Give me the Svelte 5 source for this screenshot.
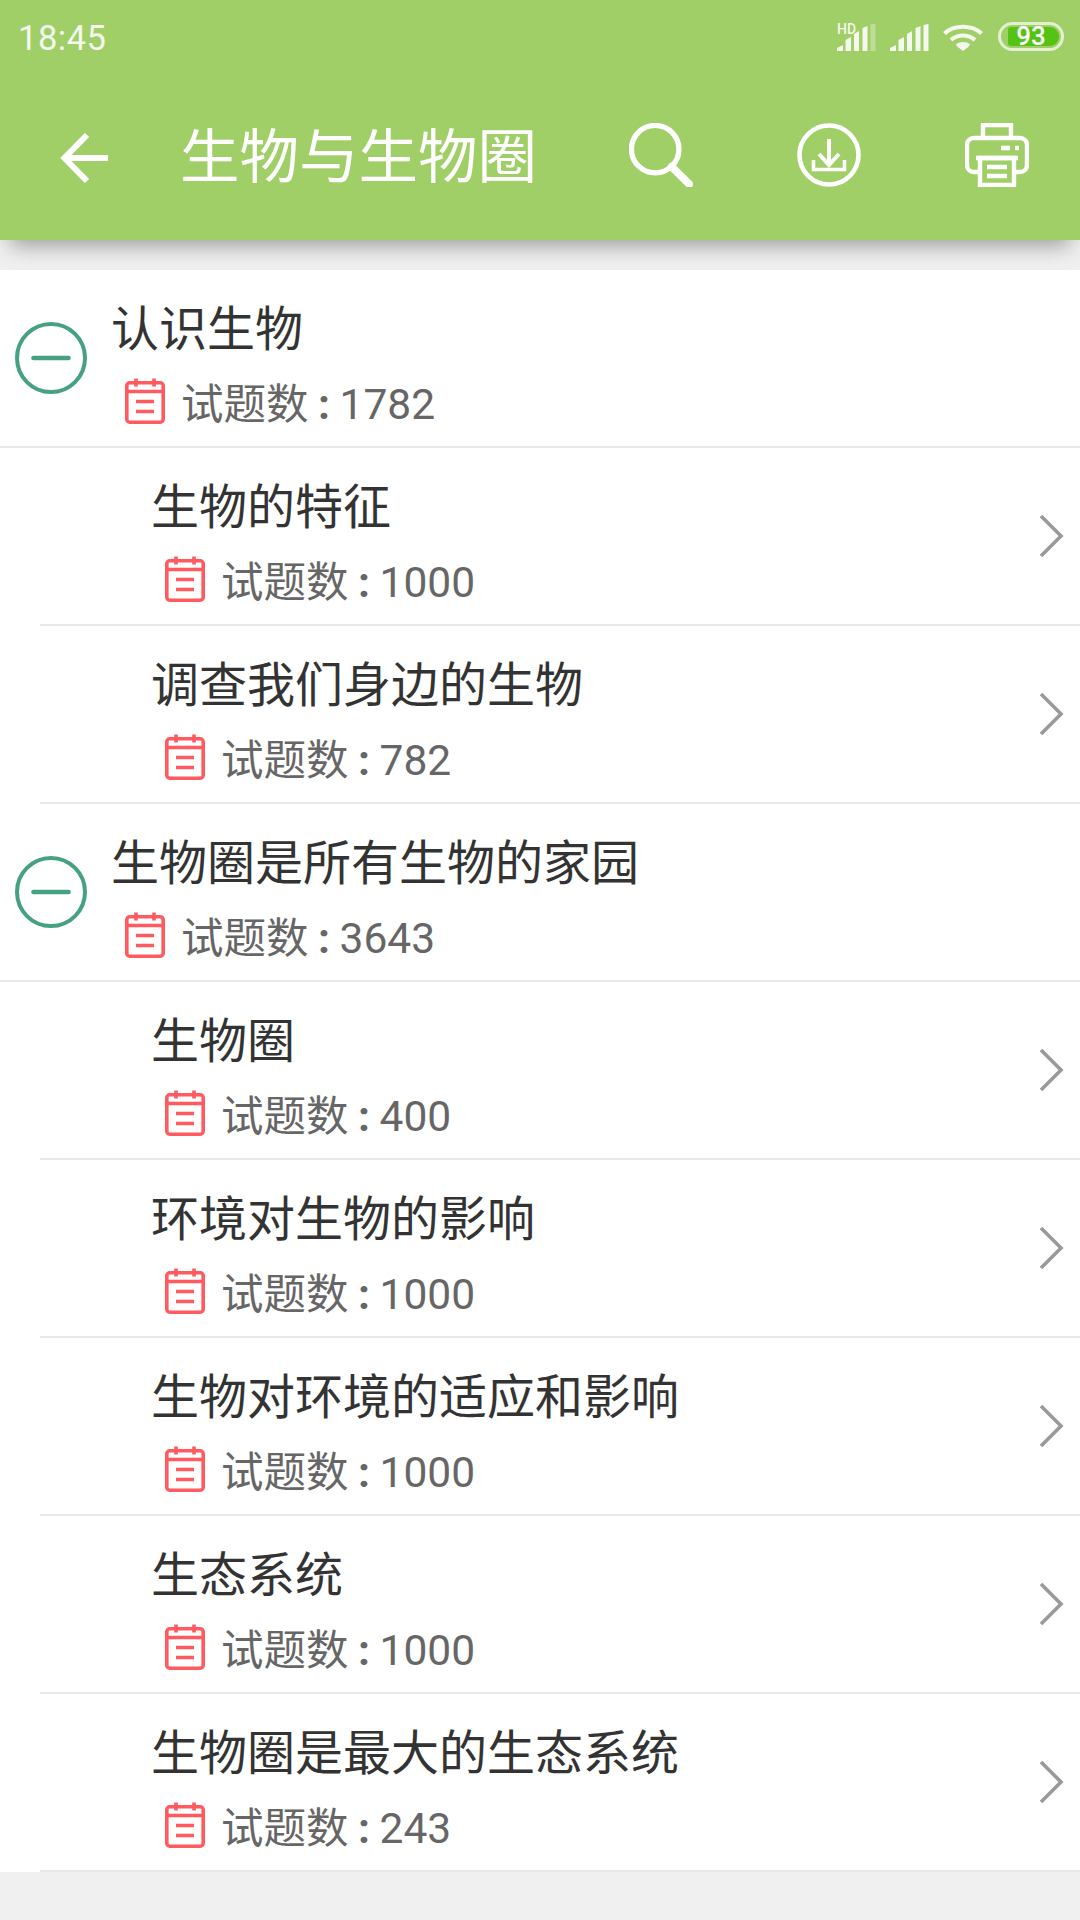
<script>
  const groups = [
    {
      name: '认识生物',
      count: 1782,
      children: [
        { name: '生物的特征', count: 1000 },
        { name: '调查我们身边的生物', count: 782 }
      ]
    },
    {
      name: '生物圈是所有生物的家园',
      count: 3643,
      children: [
        { name: '生物圈', count: 400 },
        { name: '环境对生物的影响', count: 1000 },
        { name: '生物对环境的适应和影响', count: 1000 },
        { name: '生态系统', count: 1000 },
        { name: '生物圈是最大的生态系统', count: 243 }
      ]
    }
  ];
</script>

{#snippet counter(count)}
  <div class="count">
    <svg class="cal" width="40" height="46" viewBox="0 0 40 46" fill="none" stroke="#ff5a5f" stroke-width="3.600">
      <rect x="1.800" y="4.800" width="36.400" height="39.400" rx="3" />
      <path d="M2 13.500h36M11 0.500v8M29 0.500v8" />
      <path d="M11 23.500h18M11 33.500h18" />
    </svg>
    <span>试题数<span class="colon">:</span>{count}</span>
  </div>
{/snippet}

<div class="page">
  <header class="appbar">
    <div class="status">
      <span class="time">18:45</span>
      <div class="status-icons">
        <div class="signal">
          <span class="hd-label">HD</span>
          <svg width="39" height="27" viewBox="0 0 39 27" fill="#f4f8ee">
            <path d="M0 27v-3l6-3v6zM8.500 27V16l5.500-3v14zM17 27V10l5-3v20zM25.500 27V4l5-2v25z" />
            <path d="M33.500 27V0h5v27z" opacity=".35" />
          </svg>
        </div>
        <svg width="39" height="27" viewBox="0 0 39 27" fill="#f4f8ee">
          <path d="M0 27v-3l6-3v6zM8.500 27V16l5.500-3v14zM17 27V10l5-3v20zM25.500 27V4l5-2v25zM33.500 27V1l5-1v27z" />
        </svg>
        <svg width="40" height="28" viewBox="0 0 40 28" fill="none" stroke="#f4f8ee" stroke-width="4.200">
          <path d="M1.500 10.500C11 1.500 29 1.500 38.500 10.500" />
          <path d="M8 17c7-6 17-6 24 0" />
          <path d="M14 23c3.500-2.600 8.500-2.600 12 0" />
          <path d="M15.500 24.500l4.500-2.500l4.500 2.500l-4.500 3.500z" fill="#f4f8ee" stroke="none" />
        </svg>
        <div class="battery">
          <div class="battery-fill"></div>
          <span>93</span>
        </div>
      </div>
    </div>
    <div class="toolbar">
      <svg class="back" width="48" height="50" viewBox="0 0 48 50" fill="none" stroke="#fff" stroke-width="6">
        <path d="M27 2L4.500 25l22.500 23M4.500 25H48" />
      </svg>
      <h1>生物与生物圈</h1>
      <div class="actions">
        <svg width="64" height="64" viewBox="0 0 66 66" fill="none" stroke="#fff" stroke-width="5.500">
          <circle cx="27" cy="27" r="24.500" />
          <path d="M44 45l18 18" stroke-width="8" stroke-linecap="round" />
        </svg>
        <svg width="64" height="64" viewBox="0 0 64 64" fill="none" stroke="#fff">
          <circle cx="32" cy="32" r="29.500" stroke-width="4.600" />
          <path d="M32 16v26M22 31l10 11 10-11" stroke-width="4" />
          <path d="M16.500 37v9.500h31V37" stroke-width="3.600" />
        </svg>
        <svg width="64" height="64" viewBox="0 0 64 64" fill="none" stroke="#fff" stroke-width="4.400">
          <path d="M18 15V2h28v13" />
          <path d="M15 49H9c-4 0-7-3-7-7V22c0-4 3-7 7-7h46c4 0 7 3 7 7v20c0 4-3 7-7 7h-6" />
          <path d="M11 35h42" />
          <path d="M15 35h34v27H15z" />
          <path d="M22 44h20M22 53h20" />
          <path d="M36 25h9M50 25h4" />
        </svg>
      </div>
    </div>
  </header>

  <main class="list">
    {#each groups as group}
      <div class="row group">
        <svg class="minus" width="72" height="72" viewBox="0 0 72 72" fill="none" stroke="#45a180">
          <circle cx="36" cy="36" r="34" stroke-width="4" />
          <path d="M18.500 36h35" stroke-width="4.600" stroke-linecap="round" />
        </svg>
        <div class="text">
          <div class="title">{group.name}</div>
          {@render counter(group.count)}
        </div>
      </div>
      {#each group.children as child}
        <div class="row child">
          <div class="text">
            <div class="title">{child.name}</div>
            {@render counter(child.count)}
          </div>
          <svg class="chevron" width="25" height="44" viewBox="0 0 25 44" fill="none" stroke="#999" stroke-width="3.600">
            <path d="M2 2l20 20L2 42" />
          </svg>
        </div>
      {/each}
    {/each}
  </main>
</div>

<style>
  :global(body) {
    margin: 0;
    background: #f0f0f0;
  }
  .page {
    height: 1920px;
    overflow: hidden;
    font-family: Roboto, "Noto Sans CJK SC", sans-serif;
  }
  .appbar {
    position: relative;
    height: 240px;
    background: #a0cf67;
    color: #fff;
    box-shadow: 0 16px 20px -10px rgba(0, 0, 0, 0.34);
  }
  .status {
    display: flex;
    justify-content: space-between;
    align-items: center;
    height: 76px;
    padding: 0 16px 0 18px;
  }
  .time {
    font-size: 34.500px;
    color: #f4f8ee;
    letter-spacing: 0.5px;
  }
  .status-icons {
    display: flex;
    align-items: flex-end;
    gap: 14px;
    height: 29px;
    margin-top: -4px;
  }
  .signal {
    position: relative;
    height: 27px;
  }
  .hd-label {
    position: absolute;
    left: 0;
    top: -2px;
    font-size: 14px;
    line-height: 1;
    font-weight: 500;
    color: #f4f8ee;
  }
  .battery {
    position: relative;
    box-sizing: border-box;
    width: 66px;
    height: 29px;
    margin-left: 1px;
    border: 3px solid #e3f0d2;
    border-radius: 15px;
    display: flex;
    align-items: center;
    justify-content: center;
  }
  .battery-fill {
    position: absolute;
    left: 7px;
    right: 2px;
    top: 2px;
    bottom: 2px;
    border-radius: 3px 9px 9px 3px;
    background: #55c314;
  }
  .battery span {
    position: relative;
    font-size: 26px;
    font-weight: 500;
    line-height: 1;
    color: #fff;
  }
  .toolbar {
    display: flex;
    align-items: center;
    height: 158px;
    padding: 0 51px 0 60px;
  }
  .back {
    flex: none;
    margin-top: 5px;
  }
  h1 {
    flex: 1;
    margin: 7px 0 0 72px;
    font-size: 59.500px;
    font-weight: 400;
    line-height: 1;
    white-space: nowrap;
  }
  .actions {
    display: flex;
    align-items: center;
    gap: 104px;
  }
  .list {
    position: relative;
    margin-top: 30px;
    background: #fff;
  }
  .row {
    box-sizing: border-box;
    display: flex;
    align-items: center;
    height: 178px;
    border-bottom: 2px solid #e8e8e8;
  }
  .group {
    padding-left: 15px;
  }
  .minus {
    flex: none;
    margin-right: 24px;
  }
  .child {
    margin-left: 40px;
    padding-left: 111px;
    padding-right: 16px;
    justify-content: space-between;
  }
  .text {
    display: flex;
    flex-direction: column;
    gap: 16px;
    padding-top: 9px;
  }
  .title {
    font-size: 48px;
    line-height: 60px;
    color: #333;
    white-space: nowrap;
  }
  .count {
    display: flex;
    align-items: center;
    margin-left: 14px;
    height: 50px;
    font-size: 42.500px;
    color: #666;
  }
  .cal {
    flex: none;
    margin-right: 16px;
  }
  .colon {
    display: inline-block;
    width: 31px;
    text-align: center;
    font-weight: 700;
  }
</style>
